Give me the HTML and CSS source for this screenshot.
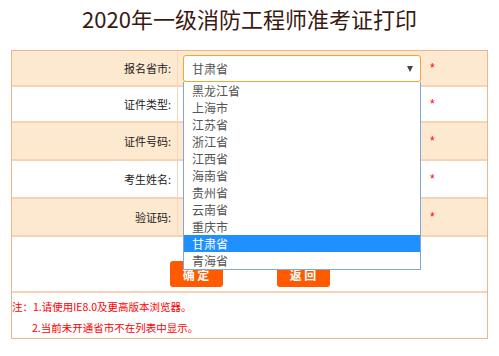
FILE: index.html
```html
<!DOCTYPE html>
<html lang="zh-CN">
<head>
<meta charset="utf-8">
<title>2020年一级消防工程师准考证打印</title>
<link rel="stylesheet" href="styles.css">
</head>
<body>
<h1 class="title">2020年一级消防工程师准考证打印</h1>
<div class="panel">
  <div class="row shade r1">
    <div class="label">报名省市:</div>
    <div class="field">
      <div class="select-wrap">
        <div class="select"><span>甘肃省</span><span class="arrow"></span></div>
        <ul class="options">
          <li>黑龙江省</li>
          <li>上海市</li>
          <li>江苏省</li>
          <li>浙江省</li>
          <li>江西省</li>
          <li>海南省</li>
          <li>贵州省</li>
          <li>云南省</li>
          <li>重庆市</li>
          <li class="active">甘肃省</li>
          <li>青海省</li>
        </ul>
      </div>
    </div>
    <div class="req">*</div>
  </div>
  <div class="row r2">
    <div class="label">证件类型:</div>
    <div class="field"><div class="input"></div></div>
    <div class="req">*</div>
  </div>
  <div class="row shade r3">
    <div class="label">证件号码:</div>
    <div class="field"><div class="input"></div></div>
    <div class="req">*</div>
  </div>
  <div class="row r4">
    <div class="label">考生姓名:</div>
    <div class="field"><div class="input"></div></div>
    <div class="req">*</div>
  </div>
  <div class="row shade r5">
    <div class="label">验证码:</div>
    <div class="field"><div class="input"></div></div>
    <div class="req">*</div>
  </div>
  <div class="actions">
    <button class="btn">确 定</button>
    <button class="btn">返 回</button>
  </div>
  <div class="notes">
    <p>注：1.请使用IE8.0及更高版本浏览器。</p>
    <p class="indent">2.当前未开通省市不在列表中显示。</p>
  </div>
</div>
</body>
</html>
```
FILE: styles.css
```css
* { box-sizing: border-box; }
body {
  margin: 0;
  background: #fff;
  font-family: "Noto Sans CJK SC", "Noto Sans", sans-serif;
}
.title {
  margin: 0;
  padding-top: 5px;
  height: 50px;
  text-align: center;
  font-size: 22px;
  line-height: 26px;
  font-weight: normal;
  color: #3a1a10;
}
.panel {
  width: 477px;
  margin: 0 auto;
  border: 1px solid #ecb58e;
}
.row {
  display: grid;
  grid-template-columns: 166px 244px 1fr;
  border-bottom: 2px solid #f8d2b5;
  height: 38px;
}
.r1, .r2 { height: 36px; }
.shade { background: #fde8d0; }
.label {
  border-right: 1px solid #f6d6bd;
  text-align: right;
  padding-right: 6px;
  font-size: 11px;
  color: #222;
  display: flex;
  align-items: center;
  justify-content: flex-end;
}
.field {
  padding-left: 5px;
  display: flex;
  align-items: center;
}
.input {
  width: 238px;
  height: 24px;
  border: 1px solid #ddd;
  background: #fff;
}
.select-wrap {
  position: relative;
  width: 238px;
}
.select {
  height: 27px;
  margin-top: 1px;
  border: 1px solid #f3a431;
  border-radius: 3px;
  background: #fff;
  display: flex;
  align-items: center;
  justify-content: space-between;
  padding: 0 7px 0 8px;
  font-size: 12px;
  color: #555;
}
.arrow {
  width: 0;
  height: 0;
  border-left: 3px solid transparent;
  border-right: 3px solid transparent;
  border-top: 6px solid #444;
}
.options {
  position: absolute;
  top: 100%;
  left: 0;
  width: 238px;
  margin: 0;
  padding: 0;
  list-style: none;
  background: #fff;
  border: 1px solid #7fa7df;
  border-top: none;
  z-index: 5;
}
.options li {
  height: 17px;
  line-height: 17px;
  padding-left: 8px;
  font-size: 12px;
  color: #555;
}
.options li.active {
  background: #1e90ff;
  color: #fff;
}
.req {
  display: flex;
  align-items: center;
  padding-left: 8px;
  color: #f00;
  font-family: "Liberation Sans", Arial, sans-serif;
  font-size: 12px;
}
.actions {
  height: 56px;
  border-bottom: 2px solid #f8d2b5;
  display: flex;
  justify-content: center;
  gap: 54px;
  padding-top: 24px;
}
.btn {
  width: 53px;
  height: 26px;
  border: none;
  border-radius: 3px;
  background: #ff5a00;
  color: #fff;
  font-family: "Noto Sans CJK SC", sans-serif;
  font-size: 12px;
  font-weight: bold;
  padding: 0;
}
.notes {
  height: 45px;
  padding-top: 3px;
}
.notes p {
  margin: 0;
  height: 21px;
  line-height: 21px;
  font-size: 10.5px;
  color: #f00;
}
.notes .indent { padding-left: 20px; }
```
